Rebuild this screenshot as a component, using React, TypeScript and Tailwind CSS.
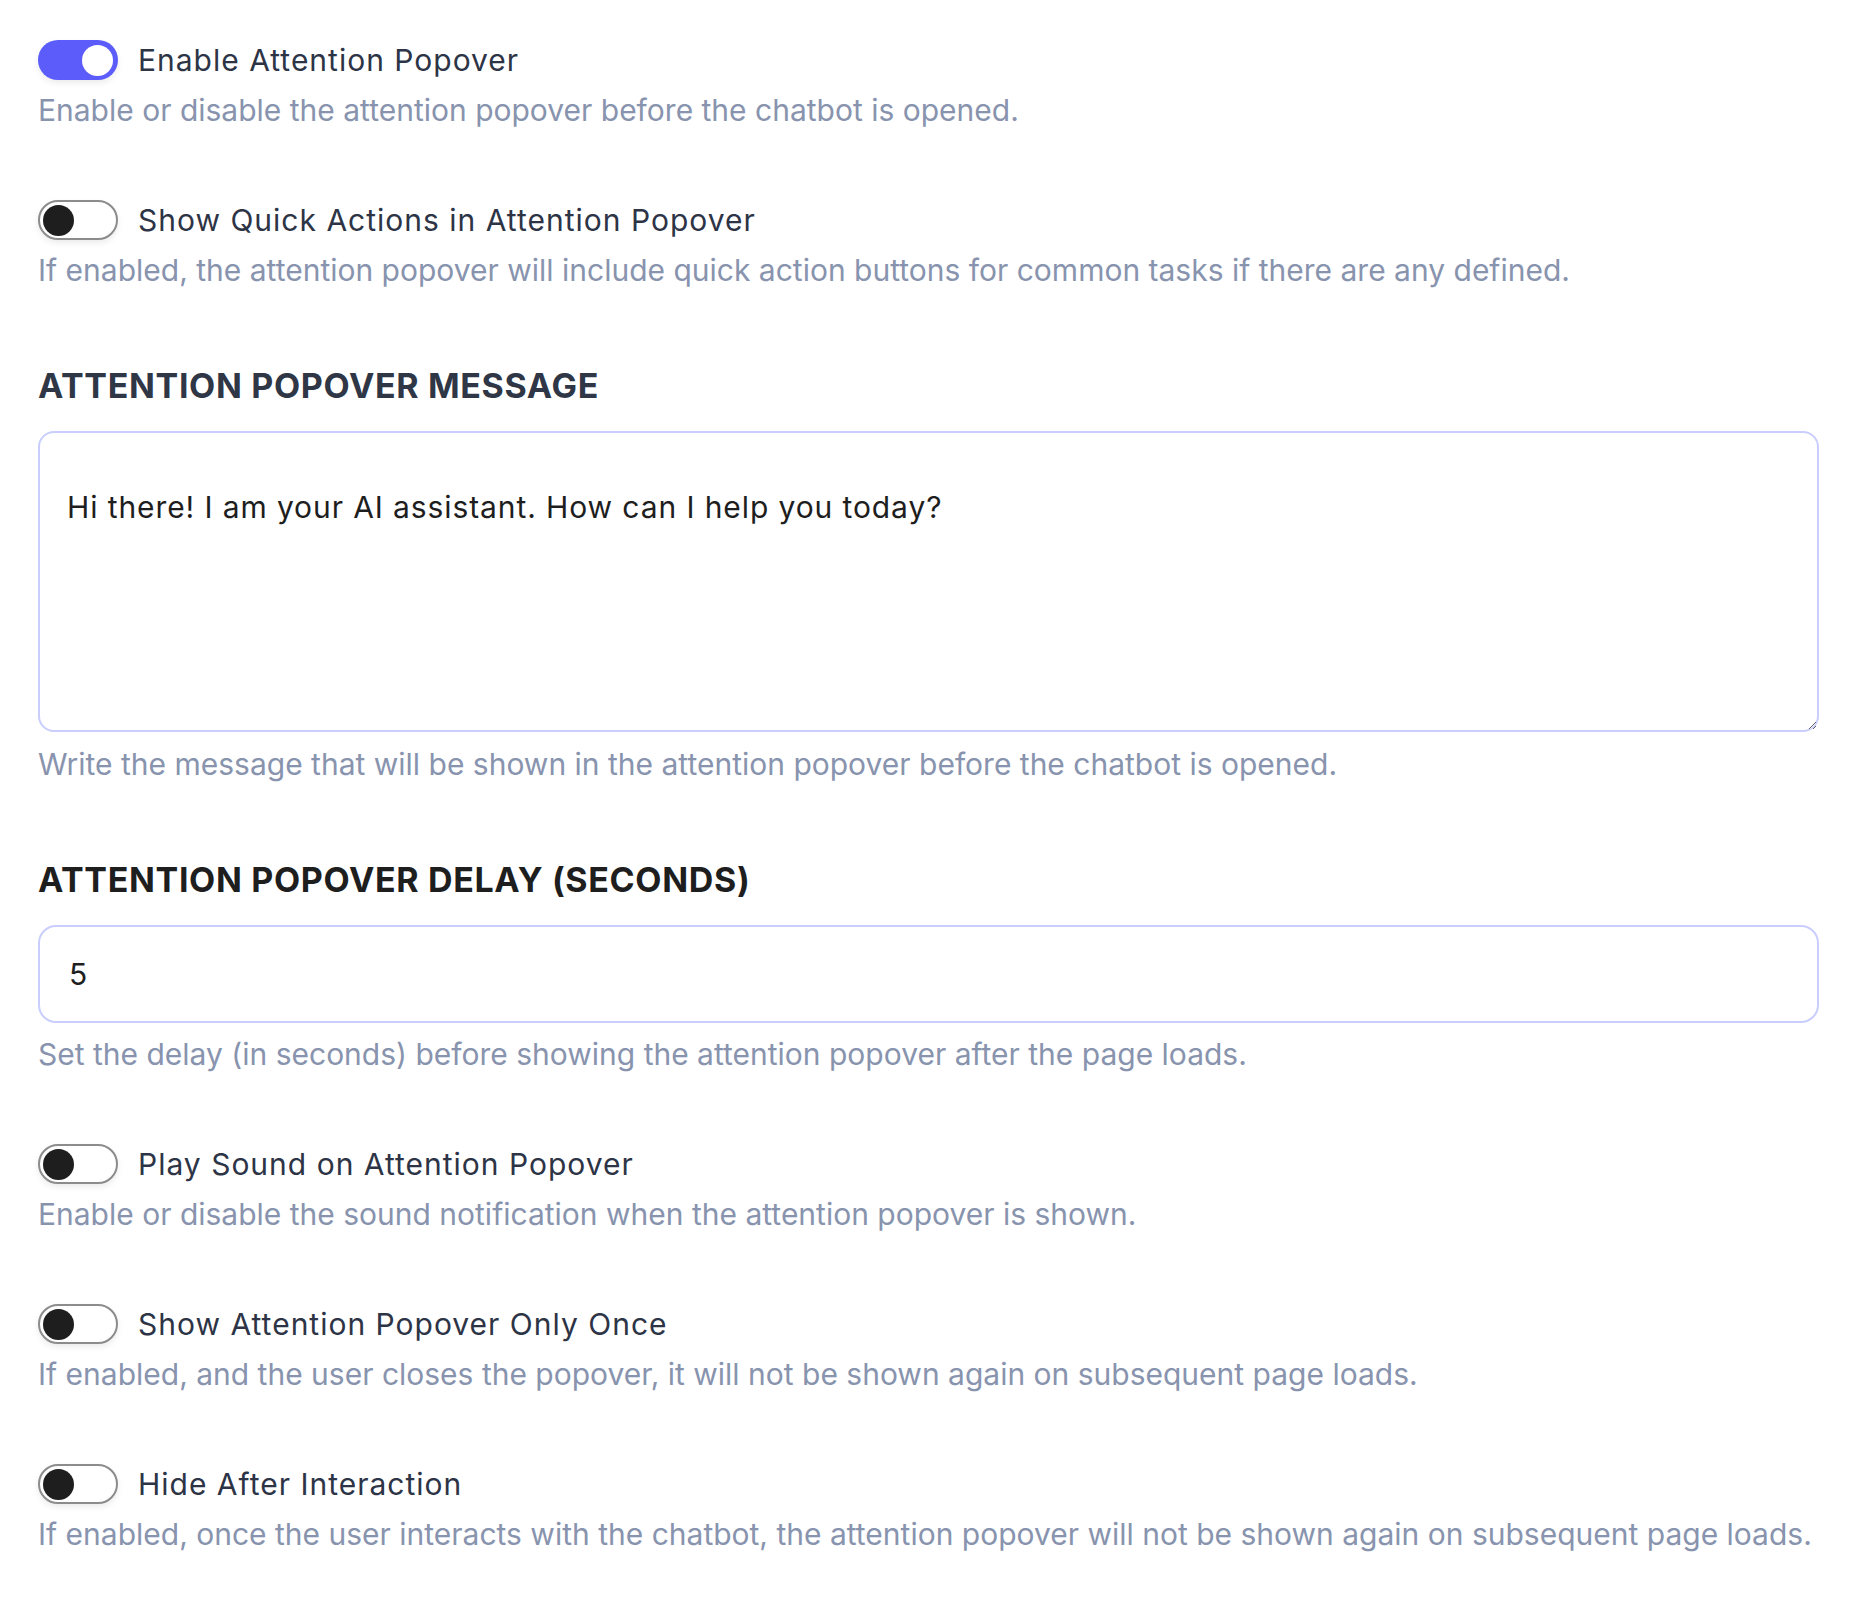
import React from 'react';

interface ToggleRowProps {
    label: string;
    description: string;
    enabled?: boolean;
    className?: string;
}

const Toggle: React.FC<{ enabled: boolean }> = ({ enabled }) => {
    if (enabled) {
        return (
            <div className="w-[80px] h-[40px] rounded-full bg-[#5c5cfa] shadow-[0_3px_6px_rgba(0,0,0,0.08)] flex items-center justify-end pr-[5px] shrink-0">
                <div className="w-[31px] h-[31px] rounded-full bg-white" />
            </div>
        );
    }
    return (
        <div className="w-[80px] h-[40px] rounded-full border-2 border-[#8c8c8c] bg-white shadow-[0_3px_6px_rgba(0,0,0,0.08)] flex items-center pl-[3px] shrink-0">
            <div className="w-[31px] h-[31px] rounded-full bg-[#1e1e1e]" />
        </div>
    );
};

const ToggleRow: React.FC<ToggleRowProps> = ({ label, description, enabled = false, className = '' }) => (
    <div className={className}>
        <div className="flex items-center gap-[20px] h-[40px]">
            <Toggle enabled={enabled} />
            <span className="text-[30px] leading-[40px] tracking-[1px] text-[#2d3446]">{label}</span>
        </div>
        <p className="mt-[10px] text-[30px] leading-[40px] text-[#8893ae]">{description}</p>
    </div>
);

export default function App() {
    return (
        <div className="min-h-[1612px] bg-white pt-[40px] pl-[38px] pr-[53px] font-['Inter',sans-serif]">
            <ToggleRow
                enabled
                label="Enable Attention Popover"
                description="Enable or disable the attention popover before the chatbot is opened."
            />
            <ToggleRow
                className="mt-[70px]"
                label="Show Quick Actions in Attention Popover"
                description="If enabled, the attention popover will include quick action buttons for common tasks if there are any defined."
            />

            <h2 className="mt-[76px] text-[34px] leading-[40px] font-bold text-[#2f3747] tracking-[0.65px]">ATTENTION POPOVER MESSAGE</h2>
            <textarea
                className="mt-[25px] block w-full h-[301px] rounded-[16px] border-2 border-[#c9cefc] bg-white pt-[54px] px-[27px] text-[30px] leading-[40px] tracking-[0.9px] text-[#1e1e1e] outline-none"
                defaultValue="Hi there! I am your AI assistant. How can I help you today?"
            />
            <p className="mt-[12px] text-[30px] leading-[40px] text-[#8893ae]">Write the message that will be shown in the attention popover before the chatbot is opened.</p>

            <h2 className="mt-[76px] text-[34px] leading-[40px] font-bold text-[#1e1e1e] tracking-[0.65px]">ATTENTION POPOVER DELAY (SECONDS)</h2>
            <div className="mt-[25px] h-[98px] rounded-[18px] border-2 border-[#c9cefc] bg-white flex items-center px-[29px]">
                <span className="text-[30px] leading-[40px] text-[#1e1e1e]">5</span>
            </div>
            <p className="mt-[11px] text-[30px] leading-[40px] text-[#8893ae]">Set the delay (in seconds) before showing the attention popover after the page loads.</p>

            <ToggleRow
                className="mt-[70px]"
                label="Play Sound on Attention Popover"
                description="Enable or disable the sound notification when the attention popover is shown."
            />
            <ToggleRow
                className="mt-[70px]"
                label="Show Attention Popover Only Once"
                description="If enabled, and the user closes the popover, it will not be shown again on subsequent page loads."
            />
            <ToggleRow
                className="mt-[70px]"
                label="Hide After Interaction"
                description="If enabled, once the user interacts with the chatbot, the attention popover will not be shown again on subsequent page loads."
            />
        </div>
    );
}
